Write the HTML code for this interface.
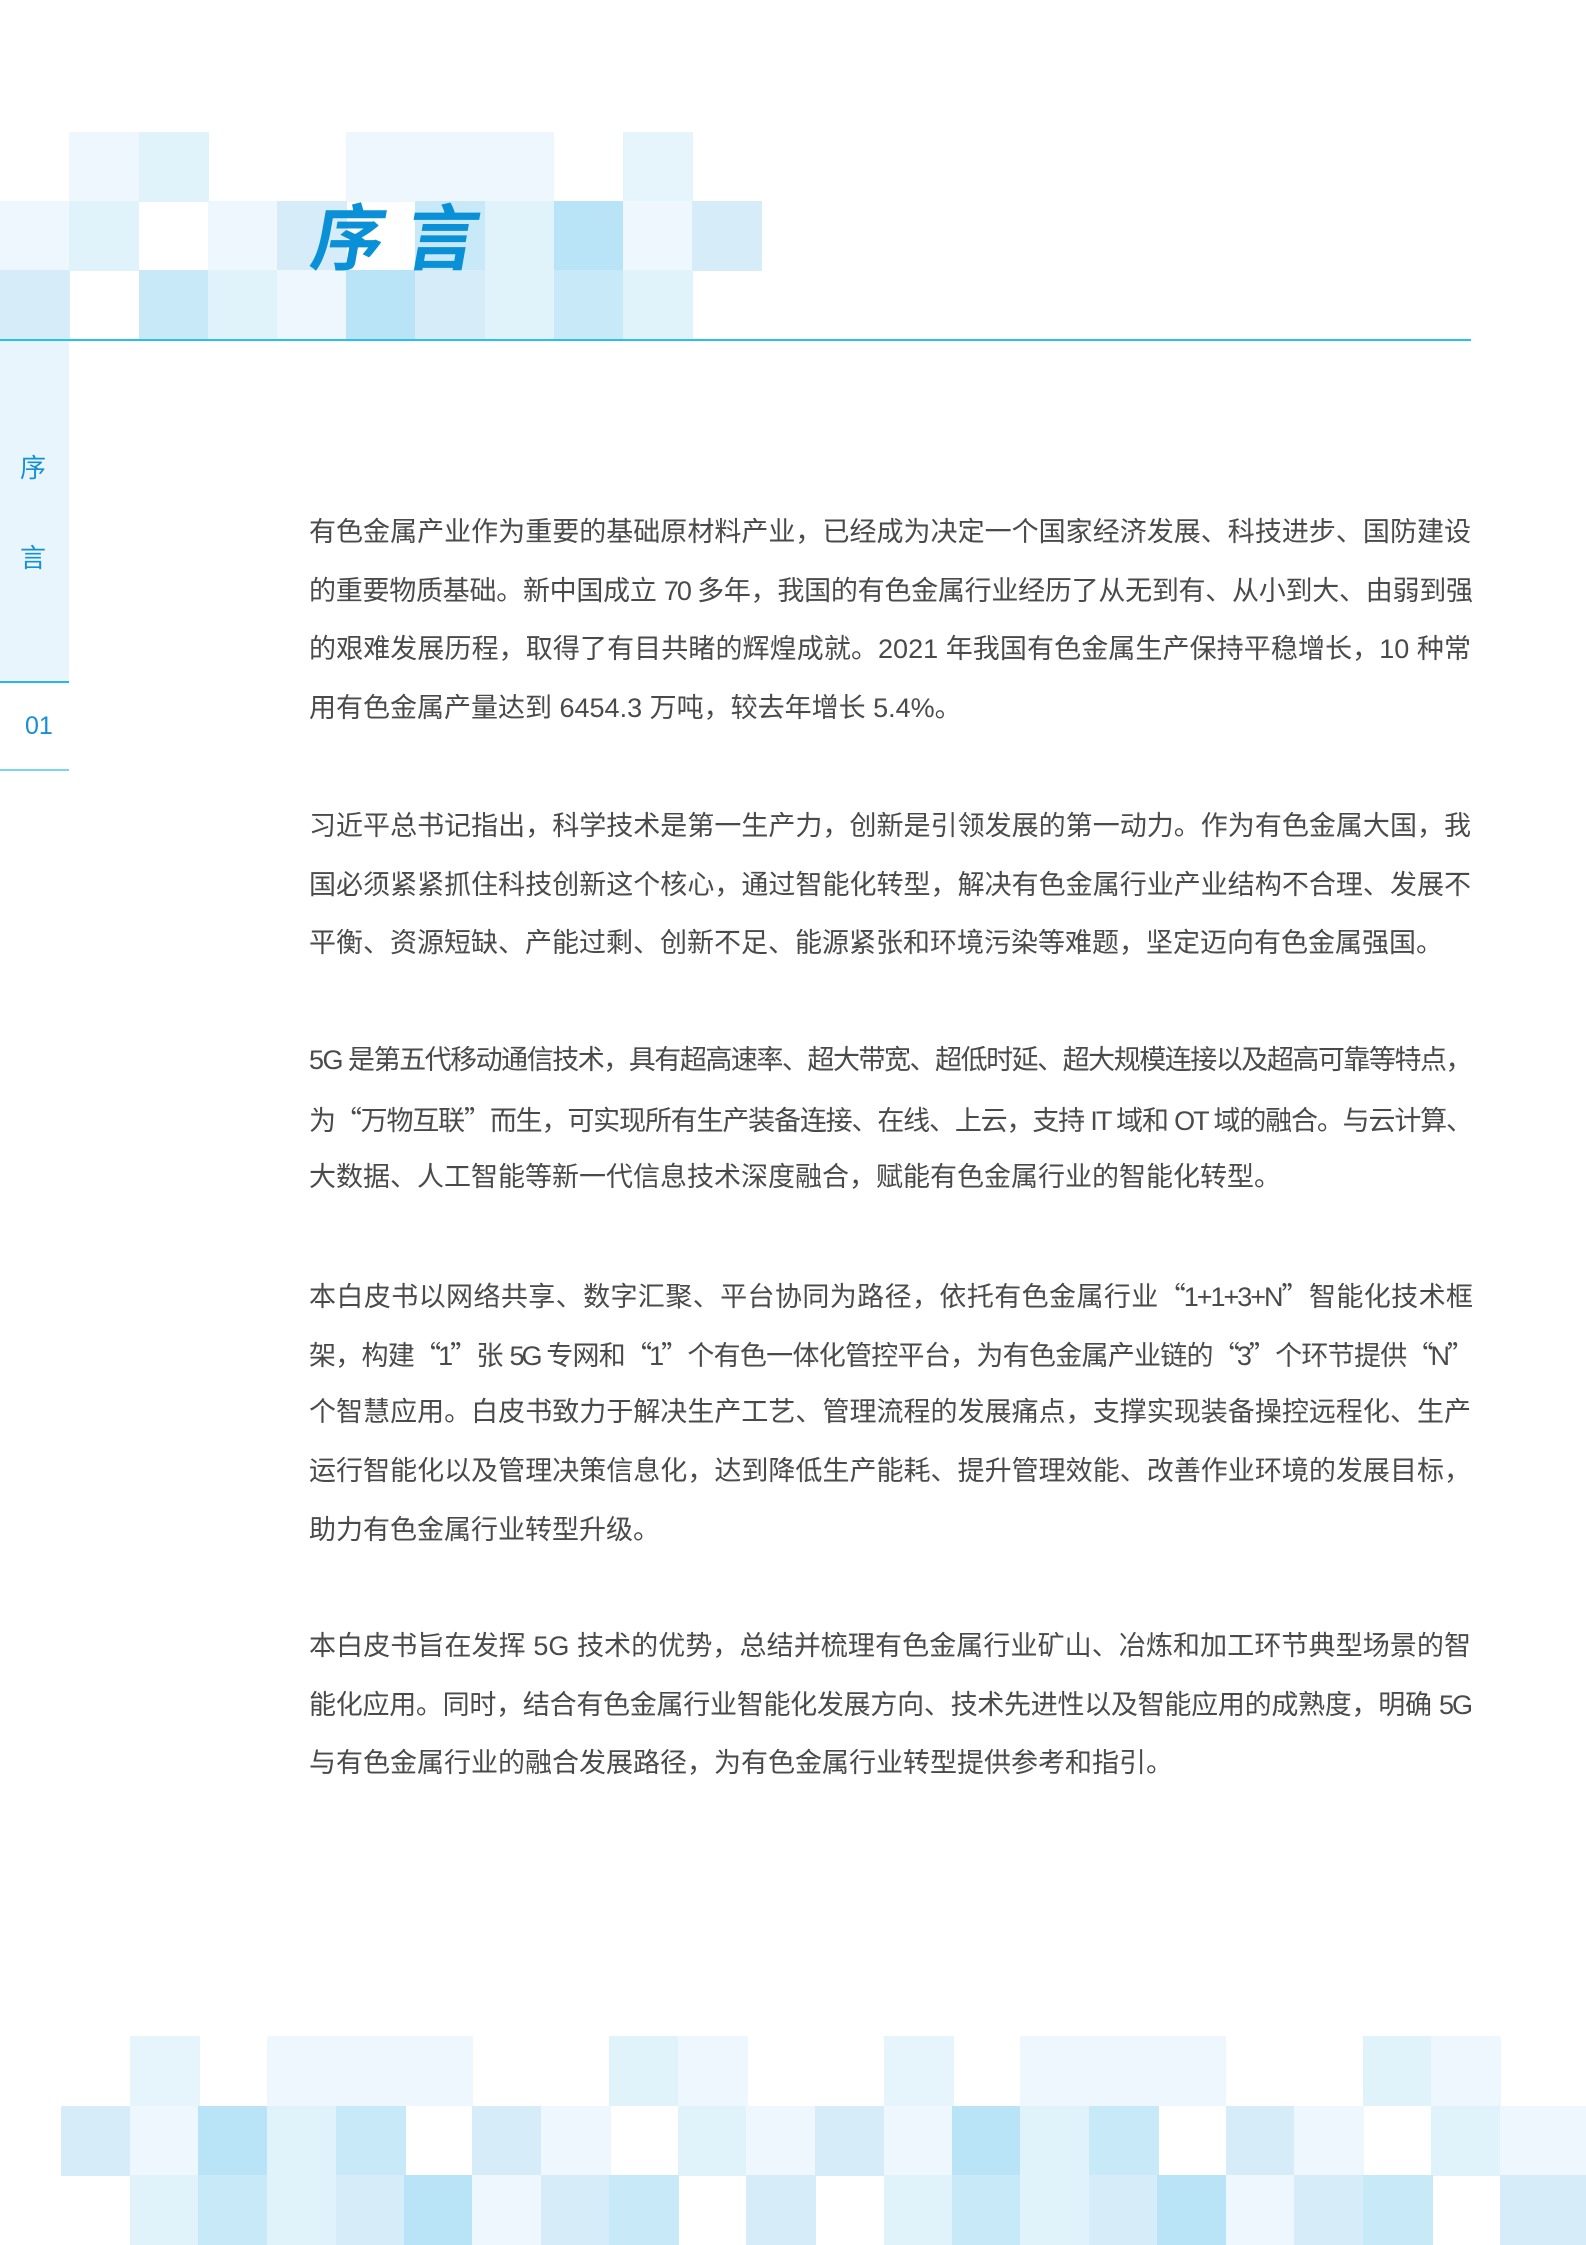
<!DOCTYPE html>
<html><head><meta charset="utf-8"><style>
*{margin:0;padding:0;box-sizing:border-box}
body{width:1586px;height:2244px;position:relative;background:#fff;overflow:hidden;font-family:"Liberation Sans","Noto Sans CJK SC",sans-serif}
.c{position:absolute;width:70px;height:70px}
.a{background:#eef7fd}.b{background:#e0f2fa}.d{background:#d6ecf9}.e{background:#c8e9f8}.f{background:#b9e4f8}.g{background:#e6f5fb}
.p{position:absolute;left:309px;width:1162px;color:#4a4a4a;font-size:27px}
.p div{height:58.7px;line-height:58.7px;text-align:justify;text-align-last:justify;overflow:visible}
.p div.l{text-align-last:left}
.p div.t{letter-spacing:-2px}
.q{font-family:"Noto Sans CJK SC",sans-serif}
</style></head><body>
<!-- header mosaic -->
<div class="c a" style="left:69px;top:132px"></div>
<div class="c b" style="left:139px;top:132px"></div>
<div class="c a" style="left:346px;top:132px;width:208px"></div>
<div class="c g" style="left:623px;top:132px"></div>
<div class="c a" style="left:0;top:201px"></div>
<div class="c b" style="left:69px;top:201px"></div>
<div class="c a" style="left:208px;top:201px"></div>
<div class="c d" style="left:277px;top:201px"></div>
<div class="c e" style="left:415px;top:201px"></div>
<div class="c b" style="left:485px;top:201px"></div>
<div class="c f" style="left:554px;top:201px"></div>
<div class="c a" style="left:623px;top:201px"></div>
<div class="c d" style="left:692px;top:201px"></div>
<div class="c d" style="left:0;top:270px"></div>
<div class="c e" style="left:139px;top:270px"></div>
<div class="c b" style="left:208px;top:270px"></div>
<div class="c a" style="left:277px;top:270px"></div>
<div class="c f" style="left:346px;top:270px"></div>
<div class="c d" style="left:415px;top:270px"></div>
<div class="c b" style="left:485px;top:270px"></div>
<div class="c e" style="left:554px;top:270px"></div>
<div class="c b" style="left:623px;top:270px"></div>
<div style="position:absolute;left:0;top:339px;width:1471px;height:2px;background:#29c0ee"></div>
<div style="position:absolute;left:314px;top:188px;font-size:72px;font-weight:bold;color:#0a90d6;letter-spacing:22px;transform:skewX(-10deg);font-family:'Noto Sans CJK SC',sans-serif;line-height:90px">序言</div>
<!-- sidebar -->
<div style="position:absolute;left:0;top:341px;width:69px;height:340px;background:#e8f5fc"></div>
<div style="position:absolute;left:0;top:681px;width:69px;height:2px;background:#29b6e8"></div>
<div style="position:absolute;left:0;top:769px;width:69px;height:2px;background:#7dd3f2"></div>
<div style="position:absolute;left:20px;top:448px;font-size:26px;color:#1590d6">序</div>
<div style="position:absolute;left:20px;top:538px;font-size:26px;color:#1590d6">言</div>
<div style="position:absolute;left:25px;top:712px;font-size:25px;color:#1590d6">01</div>
<!-- text -->
<div class="p" style="top:503px">
<div>有色金属产业作为重要的基础原材料产业，已经成为决定一个国家经济发展、科技进步、国防建设</div>
<div class="t">的重要物质基础。新中国成立 70 多年，我国的有色金属行业经历了从无到有、从小到大、由弱到强</div>
<div>的艰难发展历程，取得了有目共睹的辉煌成就。2021 年我国有色金属生产保持平稳增长，10 种常</div>
<div class="l">用有色金属产量达到 6454.3 万吨，较去年增长 5.4%。</div>
</div>
<div class="p" style="top:797px">
<div>习近平总书记指出，科学技术是第一生产力，创新是引领发展的第一动力。作为有色金属大国，我</div>
<div>国必须紧紧抓住科技创新这个核心，通过智能化转型，解决有色金属行业产业结构不合理、发展不</div>
<div class="l">平衡、资源短缺、产能过剩、创新不足、能源紧张和环境污染等难题，坚定迈向有色金属强国。</div>
</div>
<div class="p" style="top:1031px">
<div style="letter-spacing:-1.5px">5G 是第五代移动通信技术，具有超高速率、超大带宽、超低时延、超大规模连接以及超高可靠等特点，</div>
<div class="t">为<span class="q">“</span>万物互联<span class="q">”</span>而生，可实现所有生产装备连接、在线、上云，支持 IT 域和 OT 域的融合。与云计算、</div>
<div class="l">大数据、人工智能等新一代信息技术深度融合，赋能有色金属行业的智能化转型。</div>
</div>
<div class="p" style="top:1266px">
<div class="t">本白皮书以网络共享、数字汇聚、平台协同为路径，依托有色金属行业<span class="q">“</span>1+1+3+N<span class="q">”</span>智能化技术框</div>
<div style="letter-spacing:-3px">架，构建<span class="q">“</span>1<span class="q">”</span>张 5G 专网和<span class="q">“</span>1<span class="q">”</span>个有色一体化管控平台，为有色金属产业链的<span class="q">“</span>3<span class="q">”</span>个环节提供<span class="q">“</span>N<span class="q">”</span></div>
<div>个智慧应用。白皮书致力于解决生产工艺、管理流程的发展痛点，支撑实现装备操控远程化、生产</div>
<div>运行智能化以及管理决策信息化，达到降低生产能耗、提升管理效能、改善作业环境的发展目标，</div>
<div class="l">助力有色金属行业转型升级。</div>
</div>
<div class="p" style="top:1617px">
<div>本白皮书旨在发挥 5G 技术的优势，总结并梳理有色金属行业矿山、冶炼和加工环节典型场景的智</div>
<div class="t">能化应用。同时，结合有色金属行业智能化发展方向、技术先进性以及智能应用的成熟度，明确 5G</div>
<div class="l">与有色金属行业的融合发展路径，为有色金属行业转型提供参考和指引。</div>
</div>
<!-- bottom mosaic -->
<div class="c g" style="left:130px;top:2036px"></div>
<div class="c a" style="left:267px;top:2036px;width:206px"></div>
<div class="c b" style="left:609px;top:2036px"></div>
<div class="c a" style="left:678px;top:2036px"></div>
<div class="c g" style="left:884px;top:2036px"></div>
<div class="c a" style="left:1020px;top:2036px;width:206px"></div>
<div class="c b" style="left:1363px;top:2036px"></div>
<div class="c a" style="left:1431px;top:2036px"></div>

<div class="c d" style="left:61px;top:2106px"></div>
<div class="c a" style="left:130px;top:2106px"></div>
<div class="c f" style="left:198px;top:2106px"></div>
<div class="c b" style="left:267px;top:2106px"></div>
<div class="c e" style="left:336px;top:2106px"></div>
<div class="c d" style="left:472px;top:2106px"></div>
<div class="c a" style="left:541px;top:2106px"></div>
<div class="c b" style="left:678px;top:2106px"></div>
<div class="c a" style="left:746px;top:2106px"></div>
<div class="c d" style="left:815px;top:2106px"></div>
<div class="c a" style="left:884px;top:2106px"></div>
<div class="c f" style="left:952px;top:2106px"></div>
<div class="c b" style="left:1020px;top:2106px"></div>
<div class="c e" style="left:1089px;top:2106px"></div>
<div class="c d" style="left:1226px;top:2106px"></div>
<div class="c a" style="left:1294px;top:2106px"></div>
<div class="c b" style="left:1431px;top:2106px"></div>
<div class="c a" style="left:1500px;top:2106px;width:86px"></div>

<div class="c b" style="left:130px;top:2175px"></div>
<div class="c e" style="left:198px;top:2175px"></div>
<div class="c b" style="left:267px;top:2175px"></div>
<div class="c d" style="left:336px;top:2175px"></div>
<div class="c f" style="left:404px;top:2175px"></div>
<div class="c a" style="left:472px;top:2175px"></div>
<div class="c d" style="left:541px;top:2175px"></div>
<div class="c e" style="left:609px;top:2175px"></div>
<div class="c d" style="left:746px;top:2175px"></div>
<div class="c b" style="left:884px;top:2175px"></div>
<div class="c e" style="left:952px;top:2175px"></div>
<div class="c b" style="left:1020px;top:2175px"></div>
<div class="c d" style="left:1089px;top:2175px"></div>
<div class="c f" style="left:1157px;top:2175px"></div>
<div class="c a" style="left:1226px;top:2175px"></div>
<div class="c d" style="left:1294px;top:2175px"></div>
<div class="c e" style="left:1363px;top:2175px"></div>
<div class="c d" style="left:1500px;top:2175px;width:86px"></div>
</body></html>
